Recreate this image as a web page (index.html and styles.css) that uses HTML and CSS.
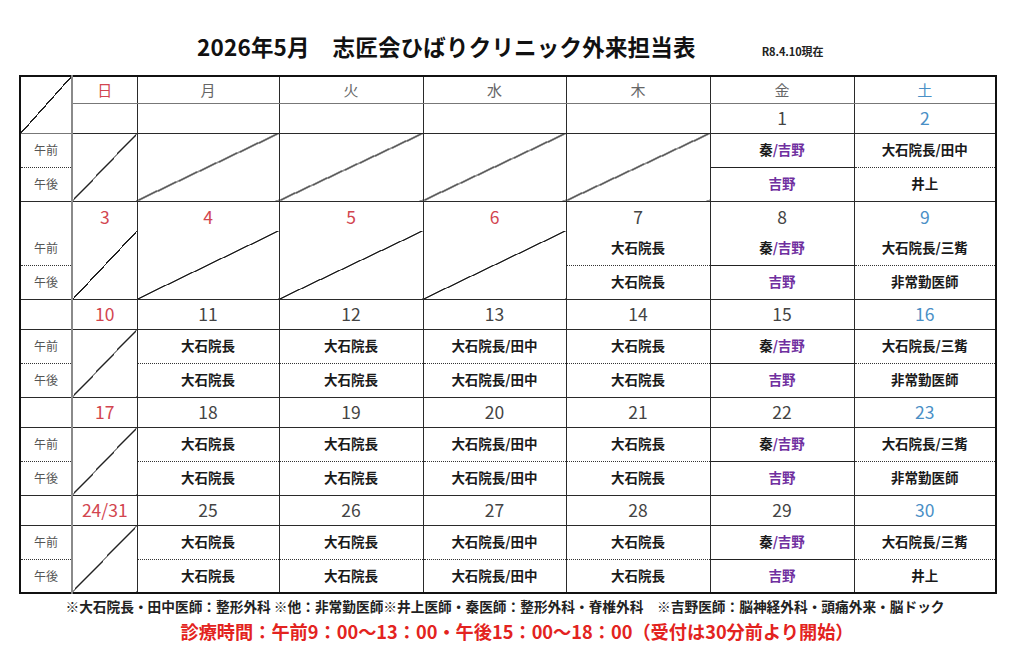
FILE: index.html
```html
<!DOCTYPE html>
<html lang="ja">
<head>
<meta charset="utf-8">
<title>2026年5月 志匠会ひばりクリニック外来担当表</title>
<link rel="stylesheet" href="styles.css">
</head>
<body>
<div class="page">
  <header class="title-row">
    <h1 class="title">2026年5月　志匠会ひばりクリニック外来担当表</h1>
    <span class="asof">R8.4.10現在</span>
  </header>
  <table class="sched">
    <colgroup>
      <col class="c-label"><col class="c-sun"><col class="c-mon"><col class="c-tue"><col class="c-wed"><col class="c-thu"><col class="c-fri"><col class="c-sat">
    </colgroup>
    <tbody>
      <tr class="r-head">
        <td class="lbl diag corner" rowspan="2"></td>
        <td class="dn sun">日</td><td class="dn">月</td><td class="dn">火</td><td class="dn">水</td><td class="dn">木</td><td class="dn">金</td><td class="dn sat">土</td>
      </tr>
      <tr class="r-date">
        <td class="dt"></td><td class="dt"></td><td class="dt"></td><td class="dt"></td><td class="dt"></td><td class="dt">1</td><td class="dt sat">2</td>
      </tr>

      <tr class="r-am">
        <td class="lbl">午前</td>
        <td class="diag span" rowspan="2"></td>
        <td class="diag span" rowspan="2"></td>
        <td class="diag span" rowspan="2"></td>
        <td class="diag span" rowspan="2"></td>
        <td class="diag span" rowspan="2"></td>
        <td class="nm fri">秦<span class="p">/吉野</span></td>
        <td class="nm">大石院長/田中</td>
      </tr>
      <tr class="r-pm r-pm1">
        <td class="lbl">午後</td>
        <td class="nm"><span class="p">吉野</span></td>
        <td class="nm">井上</td>
      </tr>

      <tr class="r-date nob">
        <td class="lbl"></td>
        <td class="dt sun">3</td><td class="dt sun">4</td><td class="dt sun">5</td><td class="dt sun">6</td><td class="dt">7</td><td class="dt">8</td><td class="dt sat">9</td>
      </tr>
      <tr class="r-am not">
        <td class="lbl">午前</td>
        <td class="diag span" rowspan="2"></td>
        <td class="diag span" rowspan="2"></td>
        <td class="diag span" rowspan="2"></td>
        <td class="diag span" rowspan="2"></td>
        <td class="nm">大石院長</td>
        <td class="nm fri">秦<span class="p">/吉野</span></td>
        <td class="nm">大石院長/三觜</td>
      </tr>
      <tr class="r-pm">
        <td class="lbl">午後</td>
        <td class="nm">大石院長</td>
        <td class="nm"><span class="p">吉野</span></td>
        <td class="nm">非常勤医師</td>
      </tr>

      <tr class="r-date">
        <td class="lbl"></td>
        <td class="dt sun">10</td><td class="dt">11</td><td class="dt">12</td><td class="dt">13</td><td class="dt">14</td><td class="dt">15</td><td class="dt sat">16</td>
      </tr>
      <tr class="r-am">
        <td class="lbl">午前</td>
        <td class="diag span" rowspan="2"></td>
        <td class="nm">大石院長</td><td class="nm">大石院長</td><td class="nm">大石院長/田中</td><td class="nm">大石院長</td>
        <td class="nm fri">秦<span class="p">/吉野</span></td>
        <td class="nm">大石院長/三觜</td>
      </tr>
      <tr class="r-pm">
        <td class="lbl">午後</td>
        <td class="nm">大石院長</td><td class="nm">大石院長</td><td class="nm">大石院長/田中</td><td class="nm">大石院長</td>
        <td class="nm"><span class="p">吉野</span></td>
        <td class="nm">非常勤医師</td>
      </tr>

      <tr class="r-date">
        <td class="lbl"></td>
        <td class="dt sun">17</td><td class="dt">18</td><td class="dt">19</td><td class="dt">20</td><td class="dt">21</td><td class="dt">22</td><td class="dt sat">23</td>
      </tr>
      <tr class="r-am">
        <td class="lbl">午前</td>
        <td class="diag span" rowspan="2"></td>
        <td class="nm">大石院長</td><td class="nm">大石院長</td><td class="nm">大石院長/田中</td><td class="nm">大石院長</td>
        <td class="nm fri">秦<span class="p">/吉野</span></td>
        <td class="nm">大石院長/三觜</td>
      </tr>
      <tr class="r-pm">
        <td class="lbl">午後</td>
        <td class="nm">大石院長</td><td class="nm">大石院長</td><td class="nm">大石院長/田中</td><td class="nm">大石院長</td>
        <td class="nm"><span class="p">吉野</span></td>
        <td class="nm">非常勤医師</td>
      </tr>

      <tr class="r-date">
        <td class="lbl"></td>
        <td class="dt sun">24/31</td><td class="dt">25</td><td class="dt">26</td><td class="dt">27</td><td class="dt">28</td><td class="dt">29</td><td class="dt sat">30</td>
      </tr>
      <tr class="r-am">
        <td class="lbl">午前</td>
        <td class="diag span" rowspan="2"></td>
        <td class="nm">大石院長</td><td class="nm">大石院長</td><td class="nm">大石院長/田中</td><td class="nm">大石院長</td>
        <td class="nm fri">秦<span class="p">/吉野</span></td>
        <td class="nm">大石院長/三觜</td>
      </tr>
      <tr class="r-pm">
        <td class="lbl">午後</td>
        <td class="nm">大石院長</td><td class="nm">大石院長</td><td class="nm">大石院長/田中</td><td class="nm">大石院長</td>
        <td class="nm"><span class="p">吉野</span></td>
        <td class="nm">井上</td>
      </tr>
    </tbody>
  </table>
  <p class="note">※大石院長・田中医師：整形外科 ※他：非常勤医師※井上医師・秦医師：整形外科・脊椎外科　※吉野医師：脳神経外科・頭痛外来・脳ドック</p>
  <p class="hours">診療時間：午前9：00～13：00・午後15：00～18：00（受付は30分前より開始）</p>
</div>
</body>
</html>
```

FILE: styles.css
```css
html, body {
  margin: 0;
  padding: 0;
  background: #ffffff;
}

body {
  font-family: "Noto Sans CJK JP", "Noto Sans", sans-serif;
  color: #111;
}

.page {
  width: 978px;
  margin-left: 19px;
}

.title-row {
  height: 75px;
  box-sizing: border-box;
  padding-top: 32px;
  padding-left: 178px;
  display: flex;
  align-items: baseline;
}

.title {
  margin: 0;
  font-size: 22.5px;
  line-height: 28px;
  font-weight: 700;
  color: #111;
  white-space: nowrap;
  letter-spacing: 0.2px;
}

.asof {
  margin-left: 66px;
  font-size: 11px;
  font-weight: 700;
  color: #222;
  white-space: nowrap;
  letter-spacing: -0.1px;
}

.sched {
  width: 978px;
  border-collapse: collapse;
  table-layout: fixed;
  border: 2px solid #111;
}

.c-label { width: 52px; }
.c-sun { width: 65px; }
.c-mon { width: 142px; }
.c-tue { width: 144px; }
.c-wed { width: 143px; }
.c-thu { width: 144px; }
.c-fri { width: 144px; }
.c-sat { width: 142px; }

.sched td {
  border: 1px solid #2a2a2a;
  padding: 0;
  text-align: center;
  vertical-align: middle;
  line-height: 1;
}

.sched td.lbl {
  border-right: 2px solid #8a8a8a;
  font-size: 12px;
  color: #555;
}

.r-head { height: 27px; }
.r-date { height: 30px; }
.r-am { height: 34px; }
.r-pm { height: 34px; }
.r-pm1 { height: 34px; }

.r-head td { border-bottom: 1px solid #777; }

.dn {
  font-size: 15px;
  color: #666;
}

.dt {
  font-size: 17.5px;
  color: #444;
  font-weight: 400;
}

.sun { color: #d2454f; }
.sat { color: #4a8fc6; }

.nm {
  font-size: 13.5px;
  font-weight: 700;
  color: #1a1a1a;
}

.p { color: #7030a0; }

.r-am td { border-bottom: 1px dotted #333; }
.r-am td.fri { border-bottom: 1px solid #222; }
.r-am td.span { border-bottom: 1px solid #2a2a2a; }
.r-pm td { border-top: none; }

.nob td { border-bottom: none; }
.not td { border-top: none; }

.diag {
  background: linear-gradient(to bottom right,
    transparent calc(50% - 0.65px),
    #222 calc(50% - 0.65px),
    #222 calc(50% + 0.65px),
    transparent calc(50% + 0.65px));
}

.note {
  margin: 0;
  padding-top: 3px;
  padding-right: 6px;
  text-align: center;
  font-size: 13.7px;
  line-height: 18px;
  font-weight: 700;
  color: #222;
  white-space: nowrap;
}

.hours {
  margin: 5px 0 0;
  padding-left: 18px;
  text-align: center;
  font-size: 18.2px;
  line-height: 22px;
  font-weight: 700;
  color: #e32320;
  white-space: nowrap;
}
```
